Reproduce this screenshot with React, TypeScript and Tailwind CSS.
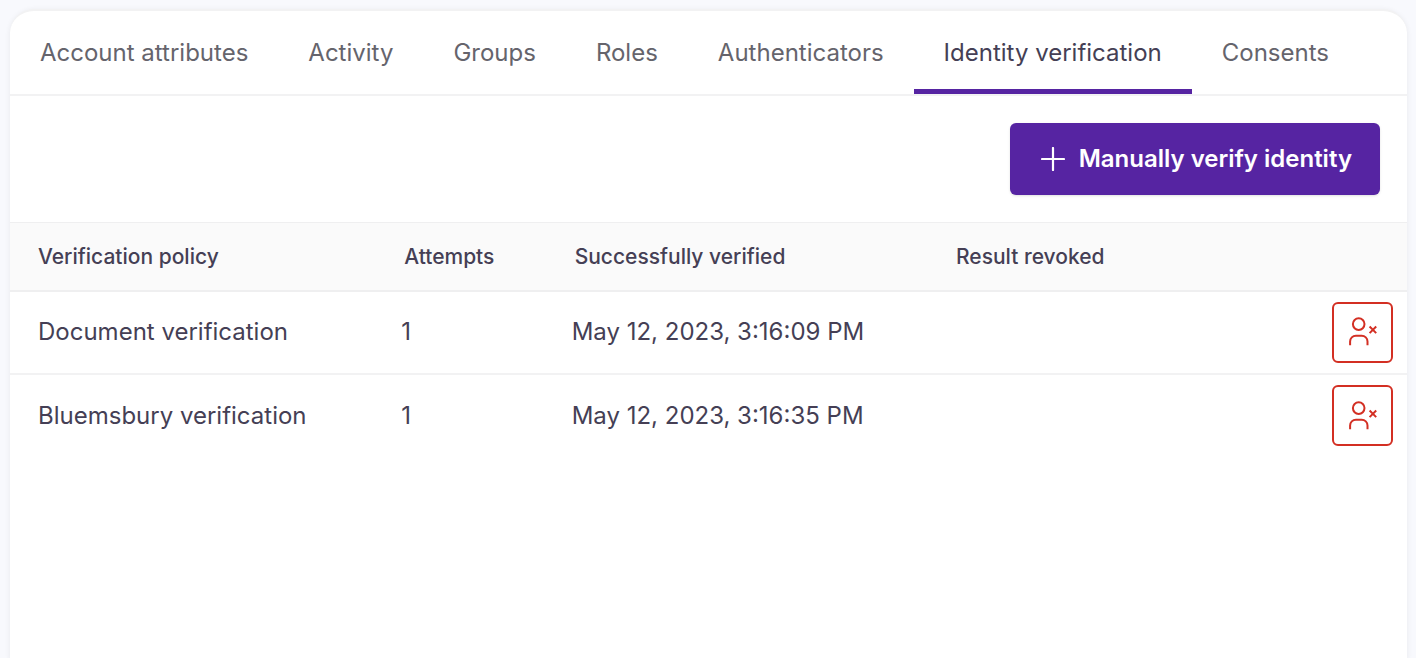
const tabs = [
  "Account attributes",
  "Activity",
  "Groups",
  "Roles",
  "Authenticators",
  "Identity verification",
  "Consents",
];

const activeTab = "Identity verification";

const verifications = [
  { policy: "Document verification", attempts: 1, verified: "May 12, 2023, 3:16:09 PM", revoked: "" },
  { policy: "Bluemsbury verification", attempts: 1, verified: "May 12, 2023, 3:16:35 PM", revoked: "" },
];

function PlusIcon() {
  return (
    <svg className="size-6" viewBox="0 0 24 24" fill="none" stroke="currentColor" strokeWidth="2.2" strokeLinecap="round" aria-hidden="true">
      <path d="M12 1v22M1 12h22" />
    </svg>
  );
}

function RevokeUserIcon() {
  return (
    <svg className="size-8" viewBox="0 0 32 32" fill="none" stroke="currentColor" strokeWidth="2" aria-hidden="true">
      <circle cx="11.7" cy="8.100" r="5.8" />
      <path d="M3.100 29.200v-3.700a5.800 5.800 0 0 1 5.800-5.800h5.800a5.800 5.800 0 0 1 5.800 5.800v3.700" />
      <path d="M22.600 10.500l6.600 6.600M29.200 10.500l-6.600 6.600" />
    </svg>
  );
}

export default function App() {
  return (
    <div className="flex min-h-screen flex-col bg-[#f8f9fd] pt-[9px] pr-[9px] pl-2.5 font-['Inter','Liberation_Sans',sans-serif] text-[#453f55]">
      <main className="flex-1 rounded-t-3xl border-t-2 border-[#f2f2f3] bg-white shadow-[0_1px_5px_1px_rgba(0,0,0,0.05)]">
        <nav aria-label="Account sections" className="flex border-b-2 border-[#f2f2f3]">
          {tabs.map((tab) => (
            <a
              key={tab}
              href="#"
              aria-current={tab === activeTab ? "page" : undefined}
              className={
                tab === activeTab
                  ? "border-b-5 border-[#5624a2] px-[30px] pt-[26px] pb-5 text-2xl whitespace-nowrap text-[#453f55]"
                  : "border-b-5 border-transparent px-[30px] pt-[26px] pb-5 text-2xl whitespace-nowrap text-[#65646c]"
              }
            >
              {tab}
            </a>
          ))}
        </nav>

        <div className="flex justify-end px-[27px] py-[27px]">
          <button type="button" className="flex h-[72px] items-center gap-3.5 rounded-md bg-[#5624a2] pr-7 pl-[31px] text-2xl font-semibold text-white shadow-sm">
            <PlusIcon />
            Manually verify identity
          </button>
        </div>

        <table className="w-full table-fixed text-left">
          <colgroup>
            <col className="w-[26%]" />
            <col className="w-[12.200%]" />
            <col className="w-[27.300%]" />
            <col />
            <col className="w-[100px]" />
          </colgroup>
          <thead>
            <tr className="h-[68px] border-t border-b-2 border-[#efeff0] bg-[#fafafa] text-[21px]">
              <th scope="col" className="pl-7 font-medium">Verification policy</th>
              <th scope="col" className="pl-[31px] font-medium">Attempts</th>
              <th scope="col" className="pl-[31px] font-medium">Successfully verified</th>
              <th scope="col" className="pl-[31px] font-medium">Result revoked</th>
              <td />
            </tr>
          </thead>
          <tbody>
            {verifications.map((row) => (
              <tr key={row.policy} className="h-[83px] border-b-2 border-[#f2f2f3] text-2xl last:border-b-0">
                <td className="pl-7">{row.policy}</td>
                <td className="pl-7">{row.attempts}</td>
                <td className="pl-7">{row.verified}</td>
                <td className="pl-7">{row.revoked}</td>
                <td className="pr-3.5">
                  <button
                    type="button"
                    aria-label={`Revoke ${row.policy}`}
                    className="ml-auto flex size-[61px] items-center justify-center rounded-md border-2 border-[#d32f23] text-[#d32f23]"
                  >
                    <RevokeUserIcon />
                  </button>
                </td>
              </tr>
            ))}
          </tbody>
        </table>
      </main>
    </div>
  );
}
